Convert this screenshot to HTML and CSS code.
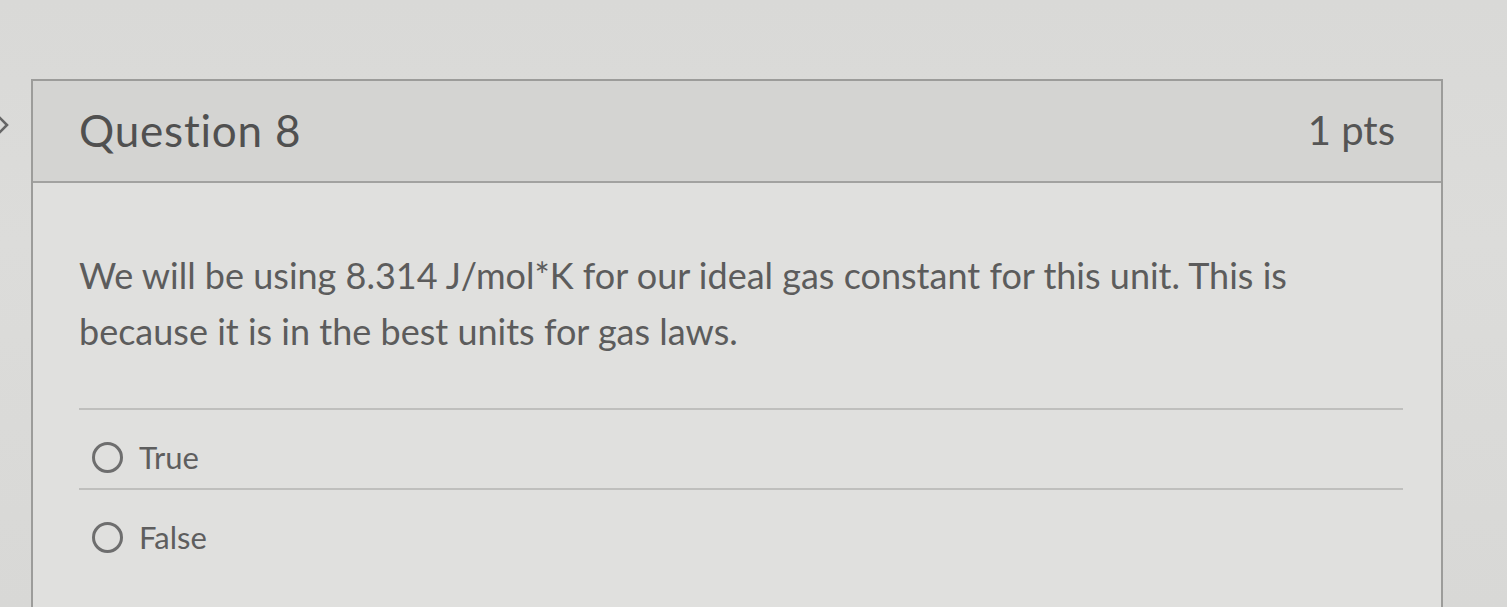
FILE: index.html
```html
<!DOCTYPE html>
<html lang="en">
<head>
    <meta charset="UTF-8">
    <meta name="viewport" content="width=device-width, initial-scale=1.0">
    <title>Quiz - Question 8</title>
    <link rel="stylesheet" href="styles.css">
</head>
<body>
    <div class="page">
        <!-- collapse arrow of the side nav -->
        <div class="gutter">
            <svg class="nav-toggle" width="31" height="40" viewBox="0 0 31 40">
                <path d="M-3 9 L7 19 L-3 29" fill="none" stroke="#666" stroke-width="2.6"/>
            </svg>
        </div>

        <div class="question">
            <div class="question-header">
                <h2 class="question-title">Question 8</h2>
                <span class="question-points">1 pts</span>
            </div>

            <div class="question-body">
                <p class="question-text">We will be using 8.314 J/mol*K for our ideal gas constant for this unit. This is because it is in the best units for gas laws.</p>

                <div class="answers">
                    <label class="answer">
                        <span class="radio"></span>
                        <span class="answer-label">True</span>
                    </label>
                    <label class="answer">
                        <span class="radio"></span>
                        <span class="answer-label">False</span>
                    </label>
                </div>
            </div>
        </div>
    </div>
</body>
</html>
```

FILE: styles.css
```css
body {
    margin: 0;
    font-family: Lato, "Open Sans", sans-serif;
    color: #585858;
    background: linear-gradient(180deg, #d9d9d7 0%, #dcdcda 40%, #d8d8d6 100%);
    height: 607px;
    overflow: hidden;
}
.page {
    display: flex;
    padding-top: 79px;
}
.gutter {
    width: 31px;
    flex-shrink: 0;
}
.nav-toggle {
    display: block;
    margin-top: 27px;
}
.question {
    width: 1412px;
    height: 528px;
    box-sizing: border-box;
    border: 2px solid #9c9c9a;
    border-bottom: none;
    background: #e0e0de;
}
.question-header {
    display: flex;
    justify-content: space-between;
    align-items: center;
    height: 100px;
    padding: 0 46px;
    background: #d4d4d2;
    border-bottom: 2px solid #a2a2a0;
}
.question-title {
    margin: 0;
    padding-bottom: 2px;
    font-size: 44px;
    font-weight: normal;
    letter-spacing: 0.8px;
    color: #505050;
}
.question-points {
    padding-bottom: 2px;
    font-size: 40px;
    color: #555;
}
.question-body {
    padding: 64px 38px 0 46px;
}
.question-text {
    margin: 0;
    font-size: 36px;
    line-height: 56px;
    color: #5c5c5c;
}
.answers {
    margin-top: 49px;
    border-top: 2px solid #bfbfbd;
}
.answer {
    display: flex;
    align-items: center;
    gap: 16px;
    height: 80px;
    padding: 16px 0 0 13px;
    box-sizing: border-box;
    border-bottom: 2px solid #bfbfbd;
}
.answer + .answer {
    height: 100px;
    padding-bottom: 22px;
    border-bottom: none;
}
.radio {
    width: 25px;
    height: 25px;
    border: 3px solid #6e6e6e;
    border-radius: 50%;
}
.answer-label {
    font-size: 31px;
    color: #5e5e5e;
}
```
